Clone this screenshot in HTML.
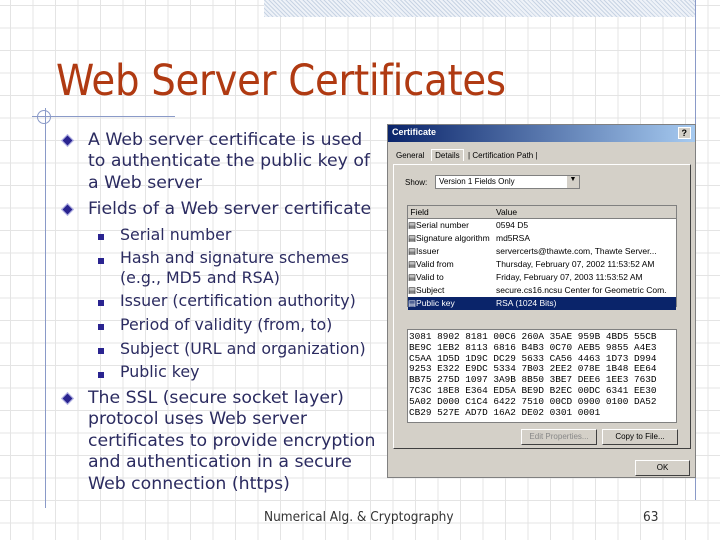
<!DOCTYPE html>
<html><head><meta charset="utf-8"><style>
*{margin:0;padding:0;box-sizing:border-box}
body{width:720px;height:540px;overflow:hidden;position:relative;background:#fff;font-family:"DejaVu Sans","Liberation Sans",sans-serif;}
.grid{position:absolute;inset:0;background-image:linear-gradient(to right,#e4e4e4 1px,transparent 1px),linear-gradient(to bottom,#e4e4e4 1px,transparent 1px);background-size:22.5px 22.5px;background-position:10px 5px}
.band{position:absolute;left:264px;top:0;width:432px;height:17px;background:repeating-linear-gradient(45deg,#c8d4e4 0 1px,#eef2f8 1px 3px)}
.vl{position:absolute;left:695px;top:0;width:1px;height:500px;background:#8a9ac8}
.t{position:absolute;left:56px;top:56px;font-size:43px;color:#b03a12;font-family:"DejaVu Sans Condensed","DejaVu Sans",sans-serif;letter-spacing:-.3px;white-space:nowrap}
.hl{position:absolute;left:32px;top:116px;width:143px;height:1px;background:#8a9ac8}
.lv{position:absolute;left:45px;top:108px;width:1px;height:400px;background:#8a9ac8}
.circ{position:absolute;left:37px;top:110px;width:14px;height:14px;border:1px solid #8a9ac8;border-radius:50%}
.p{position:absolute;font-size:17.3px;color:#2b2b60;white-space:nowrap;font-family:"DejaVu Sans",sans-serif}
.q{font-size:15.8px}
.d{position:absolute;width:9px;height:9px;background:#2a2490;transform:rotate(45deg);border:1px solid #b8b8e8}
.s{position:absolute;width:6px;height:6px;background:#2a2490}
.f{position:absolute;font-size:13.5px;color:#333;font-family:"DejaVu Sans Condensed","DejaVu Sans",sans-serif}
.dlg{position:absolute;left:387px;top:124px;width:309px;height:354px;background:#d4d0c8;border:1px solid #808080;font-size:9px;color:#000;font-family:"Liberation Sans",sans-serif}
.tb{height:17px;background:linear-gradient(to right,#0a246a,#a6caf0);color:#fff;font-weight:bold;padding:2px 4px;font-size:9px}
.btn{position:absolute;background:#d4d0c8;border:1px solid;border-color:#fff #404040 #404040 #fff;text-align:center;font-size:8px;line-height:14px}
.list{position:absolute;left:19px;top:80px;width:270px;height:102px;background:#fff;border:1px solid #808080}
.row{height:13px;line-height:13px;white-space:nowrap;overflow:hidden;font-size:8.5px}
.row span{display:inline-block}
.hex{position:absolute;left:19px;top:204px;width:270px;height:94px;background:#fff;border:1px solid #808080;font-family:"Liberation Mono",monospace;font-size:9.4px;line-height:10.8px;padding:2px 1px;white-space:pre}
</style></head><body>
<div class="grid"></div>
<div class="band"></div>
<div class="vl"></div>
<div class="t">Web Server Certificates</div>
<div class="hl"></div><div class="lv"></div><div class="circ"></div>

<div class="d" style="left:63px;top:136px"></div>
<div class="p" style="left:88px;top:130px">A Web server certificate is used</div>
<div class="p" style="left:88px;top:151px">to authenticate the public key of</div>
<div class="p" style="left:88px;top:173px">a Web server</div>
<div class="d" style="left:63px;top:205px"></div>
<div class="p" style="left:88px;top:199px">Fields of a Web server certificate</div>
<div class="s" style="left:98px;top:234px"></div><div class="p q" style="left:120px;top:225px">Serial number</div>
<div class="s" style="left:98px;top:258px"></div><div class="p q" style="left:120px;top:248px">Hash and signature schemes</div>
<div class="p q" style="left:120px;top:268px">(e.g., MD5 and RSA)</div>
<div class="s" style="left:98px;top:300px"></div><div class="p q" style="left:120px;top:291px">Issuer (certification authority)</div>
<div class="s" style="left:98px;top:324px"></div><div class="p q" style="left:120px;top:315px">Period of validity (from, to)</div>
<div class="s" style="left:98px;top:348px"></div><div class="p q" style="left:120px;top:339px">Subject (URL and organization)</div>
<div class="s" style="left:98px;top:372px"></div><div class="p q" style="left:120px;top:362px">Public key</div>
<div class="d" style="left:63px;top:394px"></div>
<div class="p" style="left:88px;top:388px">The SSL (secure socket layer)</div>
<div class="p" style="left:88px;top:409px">protocol uses Web server</div>
<div class="p" style="left:88px;top:431px">certificates to provide encryption</div>
<div class="p" style="left:88px;top:452px">and authentication in a secure</div>
<div class="p" style="left:88px;top:474px">Web connection (https)</div>

<div class="f" style="left:264px;top:509px">Numerical Alg. &amp; Cryptography</div>
<div class="f" style="left:643px;top:509px">63</div>

<div class="dlg">
<div class="tb">Certificate<span style="float:right;background:#d4d0c8;color:#000;padding:0 3px;border:1px solid #fff">?</span></div>
<div style="position:absolute;left:8px;top:26px;font-size:8px">General &nbsp; <b style="font-weight:normal;background:#d4d0c8;border:1px solid #fff;border-bottom:none;padding:1px 3px">Details</b> &nbsp;| Certification Path |</div>
<div style="position:absolute;left:5px;top:39px;width:298px;height:285px;border:1px solid;border-color:#fff #404040 #404040 #fff"></div>
<div style="position:absolute;left:17px;top:53px;font-size:8px">Show:</div>
<div style="position:absolute;left:47px;top:50px;width:145px;height:14px;background:#fff;border:1px solid #808080;font-size:8px;padding:1px 3px">Version 1 Fields Only<span style="position:absolute;right:0;top:0;width:12px;height:12px;background:#d4d0c8;font-size:7px;text-align:center">▼</span></div>
<div class="list">
<div class="row" style="background:#d4d0c8;border-bottom:1px solid #808080"><span style="width:88px">&nbsp;Field</span>Value</div>
<div class="row"><span style="width:88px">▤Serial number</span>0594 D5</div>
<div class="row"><span style="width:88px">▤Signature algorithm</span>md5RSA</div>
<div class="row"><span style="width:88px">▤Issuer</span>servercerts@thawte.com, Thawte Server...</div>
<div class="row"><span style="width:88px">▤Valid from</span>Thursday, February 07, 2002 11:53:52 AM</div>
<div class="row"><span style="width:88px">▤Valid to</span>Friday, February 07, 2003 11:53:52 AM</div>
<div class="row"><span style="width:88px">▤Subject</span>secure.cs16.ncsu Center for Geometric Com.</div>
<div class="row" style="background:#0a246a;color:#fff"><span style="width:88px">▤Public key</span>RSA (1024 Bits)</div>
</div>
<div class="hex">3081 8902 8181 00C6 260A 35AE 959B 4BD5 55CB
BE9C 1EB2 8113 6816 B4B3 0C70 AEB5 9855 A4E3
C5AA 1D5D 1D9C DC29 5633 CA56 4463 1D73 D994
9253 E322 E9DC 5334 7B03 2EE2 078E 1B48 EE64
BB75 275D 1097 3A9B 8B50 3BE7 DEE6 1EE3 763D
7C3C 18E8 E364 ED5A BE9D B2EC 00DC 6341 EE30
5A02 D000 C1C4 6422 7510 00CD 0900 0100 DA52
CB29 527E AD7D 16A2 DE02 0301 0001</div>
<div class="btn" style="left:133px;top:304px;width:76px;color:#888">Edit Properties...</div>
<div class="btn" style="left:214px;top:304px;width:76px">Copy to File...</div>
<div class="btn" style="left:247px;top:335px;width:55px">OK</div>
</div>
</body></html>
